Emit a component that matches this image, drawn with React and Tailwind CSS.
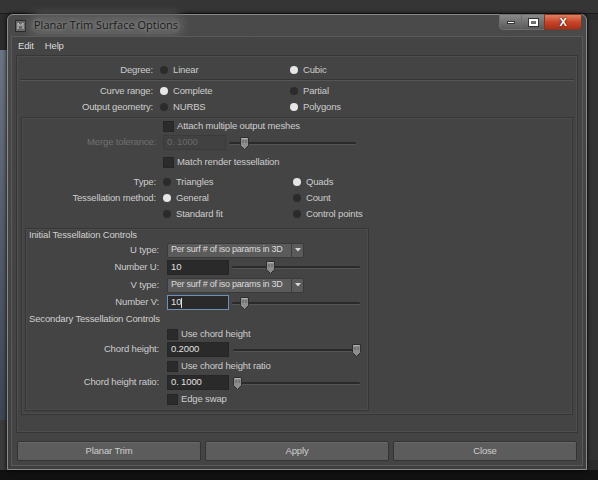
import React from 'react';

const font = { fontFamily: '"Liberation Sans", Arial, sans-serif' };

const Radio = ({ on }) => (
  <span className={`inline-block w-[8px] h-[8px] rounded-full shrink-0 ${on ? 'bg-[#e6e6e6]' : 'bg-[#2b2b2b]'}`} />
);

const Check = () => (
  <span className="inline-block w-[11px] h-[11px] shrink-0 bg-[#2b2b2b] border border-[#262626]" />
);

const Thumb = () => (
  <svg width="9" height="13" viewBox="0 0 9 13">
    <path d="M0.5 0.5 H8.5 V8.5 L4.5 12.5 L0.5 8.5 Z" fill="#8d8d8d" stroke="#2e2e2e" />
    <path d="M1.5 1.5 H7.5" stroke="#b0b0b0" />
    <path d="M3 3 V6 M6 3 V6" stroke="#5a5a5a" />
  </svg>
);

const Slider = ({ width, pos }) => (
  <div className="relative h-[16px]" style={{ width }}>
    <div className="absolute left-0 right-0 top-[7px] h-[3px] rounded-full bg-[#2a2a2a] border-b border-[#555]" />
    <div className="absolute top-[2px]" style={{ left: pos - 4 }}>
      <Thumb />
    </div>
  </div>
);

const Field = ({ value, focus, disabled, w = 62 }) => (
  <div
    className={`h-[15px] flex items-center px-[3px] text-[9.5px] ${
      focus
        ? 'bg-[#2a2a2a] border border-[#6d8fb8] text-[#e0e0e0]'
        : disabled
        ? 'bg-[#414141] border border-[#3a3a3a] text-[#6a6a6a]'
        : 'bg-[#2a2a2a] border border-[#262626] text-[#e0e0e0]'
    }`}
    style={{ width: w }}
  >
    <span>{value}</span>
    {focus && <span className="w-px h-[10px] bg-[#e0e0e0]" />}
  </div>
);

const Dropdown = () => (
  <div className="w-[137px] h-[15px] flex rounded-[2px] bg-[#5b5b5b] border border-[#3a3a3a] text-[#dcdcdc] text-[9px] tracking-[-0.25px]">
    <div className="flex-1 flex items-center pl-[3px] whitespace-nowrap overflow-hidden">Per surf # of iso params in 3D</div>
    <div className="w-[12px] border-l border-[#3e3e3e] flex items-center justify-center">
      <svg width="6" height="4" viewBox="0 0 6 4">
        <path d="M0 0 H6 L3 3.5 Z" fill="#d8d8d8" />
      </svg>
    </div>
  </div>
);

const Label = ({ w, children, dim }) => (
  <div className={`shrink-0 text-right whitespace-nowrap ${dim ? 'text-[#707070]' : 'text-[#cdcdcd]'}`} style={{ width: w }}>
    {children}
  </div>
);

const RadioRow = ({ label, lw, gap, a, b, col, h = 16 }) => (
  <div className="flex items-center" style={{ height: h }}>
    <Label w={lw}>{label}</Label>
    <div className="flex items-center" style={{ marginLeft: gap }}>
      <div className="flex items-center gap-[5px]" style={{ width: col }}>
        <Radio on={a.on} />
        <span>{a.t}</span>
      </div>
      <div className="flex items-center gap-[5px]">
        <Radio on={b.on} />
        <span>{b.t}</span>
      </div>
    </div>
  </div>
);

const Button = ({ children }) => (
  <div className="flex-1 h-[20px] flex items-center justify-center rounded-[2px] bg-[#5c5c5c] border border-[#333] shadow-[inset_0_1px_0_#6a6a6a] text-[#cfcfcf] text-[9.5px]">
    {children}
  </div>
);

export default function App() {
  return (
    <div className="relative w-[598px] h-[480px] overflow-hidden bg-[#2c2c2c] text-[9.5px] tracking-[-0.15px] text-[#cdcdcd]" style={font}>
      {/* desktop behind */}
      <div className="absolute left-0 top-0 w-[598px] h-[14px] bg-[#353535] border-b border-[#1c1c1c]" />
      <div className="absolute left-0 top-[50px] w-[8px] h-[370px] bg-gradient-to-b from-[#6a7482] to-[#3c4652]" />
      <div className="absolute left-0 top-[420px] w-[8px] h-[60px] bg-[#3a3a3a]" />
      <div className="absolute left-0 top-[470px] w-[598px] h-[10px] bg-[#111]" />
      <div className="absolute left-[588px] top-[20px] w-[10px] h-[440px] bg-[#333]" />

      {/* window */}
      <div className="absolute left-[7px] top-[14px] w-[580px] h-[456px] rounded-t-[6px] border border-[#8a8a8a] bg-gradient-to-b from-[#4a4a4a] to-[#3e3e3e] px-[3px] pb-[3px] flex flex-col shadow-[0_0_4px_#000]">
        {/* title bar */}
        <div className="h-[21px] flex justify-between shrink-0">
          <div className="flex items-center pl-[4px]">
            <svg width="11" height="12" viewBox="0 0 11 12">
              <rect x="0.5" y="0.5" width="10" height="11" fill="#6a6a6a" stroke="#2a2a2a" />
              <path d="M3 9 V3 L5.5 6 L8 3 V9" stroke="#d0d0d0" fill="none" />
            </svg>
            <span
              className="ml-[6px] px-[2px] text-[11px] text-[#1a1a1a] tracking-normal rounded-full bg-[#5e5e5e] shadow-[0_0_8px_4px_#5e5e5e] [text-shadow:0_0_4px_rgba(255,255,255,0.5)]"
              style={{ fontFamily: '"Open Sans", "Liberation Sans", sans-serif' }}
            >
              Planar Trim Surface Options
            </span>
          </div>
          <div className="flex h-[16px] -mt-px mr-[1px]">
            <div className="w-[23px] h-full rounded-bl-[4px] border border-[#6e6e6e] bg-gradient-to-b from-[#8a8a8a] to-[#5a5a5a] flex items-center justify-center">
              <span className="w-[8px] h-[3px] bg-white border border-[#333]" />
            </div>
            <div className="w-[22px] h-full border-y border-[#6e6e6e] bg-gradient-to-b from-[#8a8a8a] to-[#5a5a5a] flex items-center justify-center">
              <span className="w-[9px] h-[7px] border-2 border-white outline outline-1 outline-[#333]" />
            </div>
            <div className="w-[38px] h-full rounded-br-[4px] border border-[#7a3a2a] bg-gradient-to-b from-[#e08060] via-[#c8442a] to-[#a83018] flex items-center justify-center">
              <span className="text-white text-[11px] font-bold leading-none [text-shadow:0_0_2px_#000]">X</span>
            </div>
          </div>
        </div>

        {/* client area */}
        <div className="flex-1 flex flex-col bg-[#444444] border border-[#5a5a5a]">
          {/* menu */}
          <div className="h-[18px] flex items-center pl-[6px] gap-[11px] text-[#dcdcdc] shrink-0">
            <span>Edit</span>
            <span>Help</span>
          </div>

          {/* main frame */}
          <div className="mx-[4px] h-[378px] border border-[#363636] shadow-[inset_0_0_0_1px_#4e4e4e] pt-[6px] flex flex-col">
            <RadioRow label="Degree:" lw={136} gap={7} col={130} a={{ on: false, t: 'Linear' }} b={{ on: true, t: 'Cubic' }} />
            <div className="mx-[3px] mt-px h-[2px] border-t border-[#353535] border-b border-b-[#555]" />
            <div className="mt-[2px]" />
            <RadioRow label="Curve range:" lw={136} gap={7} col={130} a={{ on: true, t: 'Complete' }} b={{ on: false, t: 'Partial' }} />
            <RadioRow label="Output geometry:" lw={136} gap={7} col={130} a={{ on: false, t: 'NURBS' }} b={{ on: true, t: 'Polygons' }} />

            {/* inner box */}
            <div className="mt-[2px] mx-[4px] h-[298px] border border-[#363636] shadow-[inset_0_0_0_1px_#4c4c4c] flex flex-col">
              <div className="h-[16px] flex items-center pl-[141px] gap-[3px]">
                <Check />
                <span>Attach multiple output meshes</span>
              </div>
              <div className="h-[17px] flex items-center">
                <Label w={134} dim>Merge tolerance:</Label>
                <div className="ml-[7px]">
                  <Field value="0. 1000" disabled w={63} />
                </div>
                <div className="ml-[3px]">
                  <Slider width={127} pos={15} />
                </div>
              </div>
              <div className="h-[16px] mt-[3px] flex items-center pl-[141px] gap-[3px]">
                <Check />
                <span>Match render tessellation</span>
              </div>
              <div className="mt-[4px]" />
              <RadioRow label="Type:" lw={134} gap={7} col={130} a={{ on: false, t: 'Triangles' }} b={{ on: true, t: 'Quads' }} />
              <RadioRow label="Tessellation method:" lw={134} gap={7} col={130} a={{ on: true, t: 'General' }} b={{ on: false, t: 'Count' }} />
              <RadioRow label="" lw={134} gap={7} col={130} a={{ on: false, t: 'Standard fit' }} b={{ on: false, t: 'Control points' }} />

              {/* group box */}
              <div className="mt-[6px] ml-[3px] w-[344px] h-[183px] border border-[#363636] shadow-[inset_0_0_0_1px_#4c4c4c] flex flex-col">
                <div className="h-[13px] flex items-center pl-[3px] text-[#d0d0d0]">Initial Tessellation Controls</div>
                <div className="h-[16px] flex items-center">
                  <Label w={133}>U type:</Label>
                  <div className="ml-[8px]"><Dropdown /></div>
                </div>
                <div className="h-[18px] flex items-center">
                  <Label w={133}>Number U:</Label>
                  <div className="ml-[8px]"><Field value="10" /></div>
                  <div className="ml-[3px]"><Slider width={128} pos={38} /></div>
                </div>
                <div className="h-[18px] flex items-center">
                  <Label w={133}>V type:</Label>
                  <div className="ml-[8px]"><Dropdown /></div>
                </div>
                <div className="h-[17px] flex items-center">
                  <Label w={133}>Number V:</Label>
                  <div className="ml-[8px]"><Field value="10" focus /></div>
                  <div className="ml-[3px]"><Slider width={128} pos={12} /></div>
                </div>
                <div className="h-[16px] flex items-center pl-[3px] text-[#d0d0d0]">Secondary Tessellation Controls</div>
                <div className="h-[14px] flex items-center pl-[141px] gap-[3px]">
                  <Check />
                  <span>Use chord height</span>
                </div>
                <div className="h-[17px] flex items-center">
                  <Label w={133}>Chord height:</Label>
                  <div className="ml-[8px]"><Field value="0.2000" /></div>
                  <div className="ml-[4px]"><Slider width={127} pos={123} /></div>
                </div>
                <div className="h-[16px] flex items-center pl-[141px] gap-[3px]">
                  <Check />
                  <span>Use chord height ratio</span>
                </div>
                <div className="h-[17px] flex items-center">
                  <Label w={133}>Chord height ratio:</Label>
                  <div className="ml-[8px]"><Field value="0. 1000" /></div>
                  <div className="ml-[4px]"><Slider width={127} pos={4} /></div>
                </div>
                <div className="h-[16px] flex items-center pl-[141px] gap-[3px]">
                  <Check />
                  <span>Edge swap</span>
                </div>
              </div>
            </div>
          </div>

          {/* buttons */}
          <div className="mt-[8px] px-[5px] flex gap-[4px]">
            <Button>Planar Trim</Button>
            <Button>Apply</Button>
            <Button>Close</Button>
          </div>
        </div>
      </div>
    </div>
  );
}
